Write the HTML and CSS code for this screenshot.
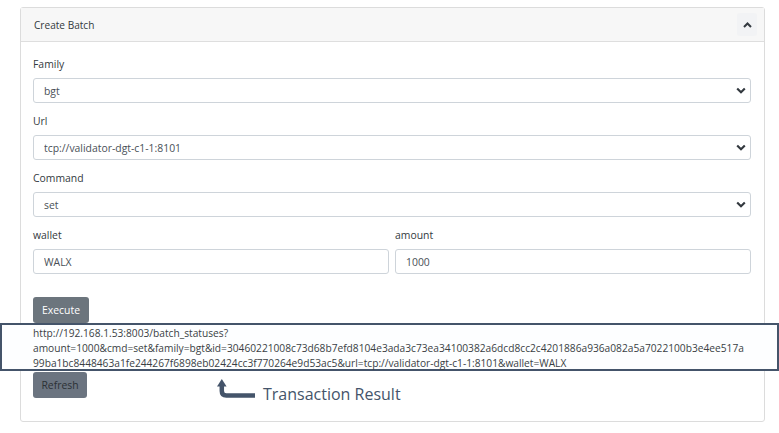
FILE: index.html
```html
<!DOCTYPE html>
<html lang="en">
<head>
<meta charset="utf-8">
<title>Create Batch</title>
<link rel="stylesheet" href="styles.css">
</head>
<body>
<div class="card">
  <div class="card-header">
    <span class="card-title">Create Batch</span>
    <button class="collapse-btn" type="button" aria-label="Collapse">
      <svg width="9" height="6" viewBox="0 0 9 6"><path d="M1 5 L4.5 1.5 L8 5" fill="none" stroke="#343a40" stroke-width="2"/></svg>
    </button>
  </div>
  <div class="card-body">
    <div class="form-group">
      <label class="label">Family</label>
      <select class="select"><option>bgt</option></select>
    </div>
    <div class="form-group">
      <label class="label">Url</label>
      <select class="select"><option>tcp://validator-dgt-c1-1:8101</option></select>
    </div>
    <div class="form-group">
      <label class="label">Command</label>
      <select class="select"><option>set</option></select>
    </div>
    <div class="form-row">
      <div class="form-group">
        <label class="label">wallet</label>
        <input class="input" type="text" value="WALX">
      </div>
      <div class="form-group">
        <label class="label">amount</label>
        <input class="input" type="text" value="1000">
      </div>
    </div>
    <button class="btn btn-execute" type="button">Execute</button>
    <div class="result">
      <span class="result-line">http://192.168.1.53:8003/batch_statuses?</span>
      <span class="result-line">amount=1000&amp;cmd=set&amp;family=bgt&amp;id=30460221008c73d68b7efd8104e3ada3c73ea34100382a6dcd8cc2c4201886a936a082a5a7022100b3e4ee517a</span>
      <span class="result-line">99ba1bc8448463a1fe244267f6898eb02424cc3f770264e9d53ac5&amp;url=tcp://validator-dgt-c1-1:8101&amp;wallet=WALX</span>
    </div>
    <div class="refresh-row">
      <button class="btn btn-refresh" type="button">Refresh</button>
      <div class="annotation">
        <svg class="arrow" width="40" height="20" viewBox="0 0 40 20">
          <path d="M4.8 6 V12 Q4.8 16.5 9.3 16.5 H38" fill="none" stroke="#44546a" stroke-width="4.5"/>
          <polygon points="0,7.5 4.8,0 9.6,7.5" fill="#44546a"/>
        </svg>
        <span class="annotation-text">Transaction Result</span>
      </div>
    </div>
  </div>
</div>
</body>
</html>
```
FILE: styles.css
```css
* { box-sizing: border-box; }

html, body {
  margin: 0;
  padding: 0;
  background: #ffffff;
}

body {
  font-family: "Open Sans", "Noto Sans", sans-serif;
  font-size: 10.4px;
  color: #333a40;
}

.card {
  margin: 7px 0 0 20px;
  width: 745px;
  border: 1px solid #dcdcdc;
  border-radius: 3px;
  background: #fff;
}

.card-header {
  height: 34px;
  display: flex;
  align-items: center;
  justify-content: space-between;
  padding: 0 7px 0 13px;
  background: #f7f7f7;
  border-bottom: 1px solid #dedede;
}

.card-title {
  color: #333a40;
  font-size: 10.1px;
}

.collapse-btn {
  width: 20px;
  height: 23px;
  padding: 0;
  border: none;
  border-radius: 3px;
  background: #f2f3f5;
  display: flex;
  align-items: center;
  justify-content: center;
}

.card-body {
  padding: 14px 13px 16px 12px;
}

.form-group {
  display: flex;
  flex-direction: column;
  margin-bottom: 10px;
}

.label {
  line-height: 16px;
  height: 16px;
  margin-bottom: 6px;
  color: #333a40;
}

.select, .input {
  height: 25px;
  width: 100%;
  border: 1px solid #ced4da;
  border-radius: 3px;
  background-color: #fff;
  color: #495057;
  font-family: "Open Sans", "Noto Sans", sans-serif;
  font-size: 10.4px;
  padding: 0 10px;
  margin: 0;
  outline: none;
}

.select {
  -webkit-appearance: none;
  appearance: none;
  background-image: url("data:image/svg+xml;utf8,<svg xmlns='http://www.w3.org/2000/svg' width='10' height='7' viewBox='0 0 10 7'><path d='M1.2 1.5 L5 5.2 L8.8 1.5' fill='none' stroke='%23343a40' stroke-width='2.2'/></svg>");
  background-repeat: no-repeat;
  background-position: right 4px center;
  background-size: 10px 7px;
}

.form-row {
  display: grid;
  grid-template-columns: 1fr 1fr;
  gap: 6px;
}

.btn {
  height: 26px;
  border: none;
  border-radius: 3px;
  background: #6c757d;
  font-family: "Open Sans", "Noto Sans", sans-serif;
  font-size: 10.4px;
  padding: 0;
  display: block;
}

.btn-execute {
  width: 56px;
  margin-top: 13px;
  color: #ffffff;
}

.btn-refresh {
  width: 54px;
  background: #6b7480;
  color: #2c3136;
}

.result {
  position: relative;
  z-index: 1;
  padding: 3px 0 0;
  line-height: 15px;
  font-size: 10.2px;
  color: #3a3f44;
}

.result::before {
  content: "";
  position: absolute;
  z-index: -1;
  left: -33px;
  right: -28px;
  top: 0;
  bottom: 0;
  border: 2px solid #44546a;
  background: #fdfeff;
}

.result-line {
  display: block;
  white-space: nowrap;
}

.refresh-row {
  display: flex;
  align-items: flex-start;
  margin-top: 1px;
}

.annotation {
  display: flex;
  align-items: flex-start;
  margin-left: 130px;
}

.arrow {
  display: block;
  margin-top: 7px;
}

.annotation-text {
  margin-left: 6px;
  margin-top: 11px;
  font-size: 16px;
  line-height: 22px;
  color: #44546a;
}
```
